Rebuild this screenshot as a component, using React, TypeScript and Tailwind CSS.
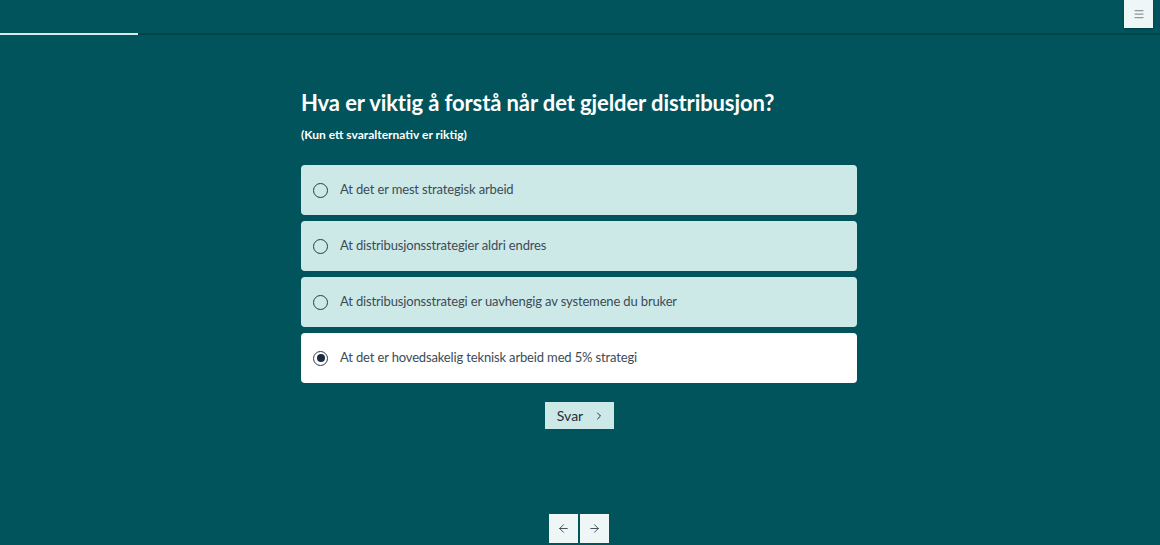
import React, { useState } from 'react';
import { ChevronRight, ArrowLeft, ArrowRight, Menu } from 'lucide-react';

const options = [
  'At det er mest strategisk arbeid',
  'At distribusjonsstrategier aldri endres',
  'At distribusjonsstrategi er uavhengig av systemene du bruker',
  'At det er hovedsakelig teknisk arbeid med 5% strategi',
];

const App: React.FC = () => {
  const [selected, setSelected] = useState(3);

  return (
    <div className="min-h-screen bg-[#01545b] font-['Lato','Noto_Sans',sans-serif] flex flex-col">
      {/* top bar with progress */}
      <div className="relative h-[36px]">
        <div className="absolute left-0 right-0 top-[33px] h-[2px] bg-[#01444a]" />
        <div className="absolute left-0 top-[33px] h-[2px] w-[138px] bg-[#d4ebea]" />
        <button className="absolute right-[7px] top-0 w-[29px] h-[28px] bg-[#eef6f6] shadow-[0_1px_2px_rgba(0,0,0,0.3)] flex items-center justify-center">
          <Menu className="w-[12px] h-[12px] text-[#8a9a9e]" strokeWidth={2.5} />
        </button>
      </div>

      <div className="w-[558px] mx-auto pt-[52px] flex flex-col">
        <h1 className="text-white text-[22px] font-bold leading-[30px] tracking-[-0.1px]">
          Hva er viktig å forstå når det gjelder distribusjon?
        </h1>
        <p className="text-white text-[12px] font-bold mt-[9px] leading-[16px]">(Kun ett svaralternativ er riktig)</p>

        <div className="mt-[22px] flex flex-col gap-[6px] pr-[2px]">
          {options.map((text, i) => {
            const active = selected === i;
            return (
              <button
                key={i}
                onClick={() => setSelected(i)}
                className={`h-[50px] rounded-[4px] flex items-center pl-[12px] text-left ${
                  active ? 'bg-white' : 'bg-[#cce9e8]'
                }`}
              >
                <span className="w-[15px] h-[15px] rounded-full border-[1.5px] border-[#2b3a45] flex items-center justify-center">
                  {active && <span className="w-[8px] h-[8px] rounded-full bg-[#1c2a44]" />}
                </span>
                <span className="ml-[12px] text-[13px] tracking-[-0.15px] text-[#3d4b55]">{text}</span>
              </button>
            );
          })}
        </div>

        <div className="flex justify-center mt-[19px] pr-[2px]">
          <button className="h-[27px] w-[69px] bg-[#cce9e8] flex items-center justify-center gap-[10px] text-[14px] text-[#1f2d3d] pl-[4px]">
            Svar
            <ChevronRight className="w-[12px] h-[12px]" strokeWidth={2} />
          </button>
        </div>
      </div>

      <div className="flex justify-center gap-[2px] mt-[85px] pr-[2px]">
        <button className="w-[29px] h-[29px] bg-[#eef6f6] flex items-center justify-center">
          <ArrowLeft className="w-[13px] h-[13px] text-[#3d4b55]" strokeWidth={1.75} />
        </button>
        <button className="w-[29px] h-[29px] bg-[#eef6f6] flex items-center justify-center">
          <ArrowRight className="w-[13px] h-[13px] text-[#3d4b55]" strokeWidth={1.75} />
        </button>
      </div>
    </div>
  );
};

export default App;
